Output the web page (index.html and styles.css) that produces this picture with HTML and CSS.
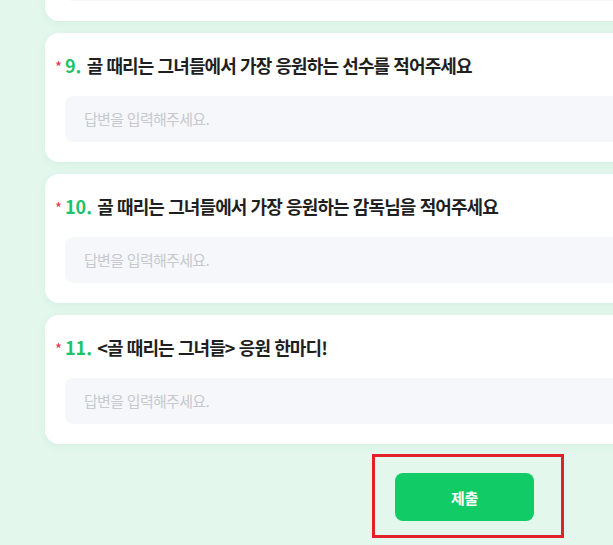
FILE: index.html
```html
<!DOCTYPE html>
<html lang="ko">
<head>
  <meta charset="UTF-8">
  <title>설문 - 골 때리는 그녀들</title>
  <link rel="stylesheet" href="styles.css">
</head>
<body>
  <div class="survey">
    <!-- 이전 질문 (스크롤되어 아래 끝만 보임) -->
    <div class="question">
      <div class="answer answer-filled"></div>
    </div>

    <div class="question">
      <h3 class="question-title"><span class="required">*</span><span class="num">9.</span> 골 때리는 그녀들에서 가장 응원하는 선수를 적어주세요</h3>
      <div class="answer">답변을 입력해주세요.</div>
    </div>

    <div class="question">
      <h3 class="question-title"><span class="required">*</span><span class="num">10.</span> 골 때리는 그녀들에서 가장 응원하는 감독님을 적어주세요</h3>
      <div class="answer">답변을 입력해주세요.</div>
    </div>

    <div class="question">
      <h3 class="question-title"><span class="required">*</span><span class="num">11.</span> &lt;골 때리는 그녀들&gt; 응원 한마디!</h3>
      <div class="answer">답변을 입력해주세요.</div>
    </div>

    <div class="submit-row">
      <div class="highlight">
        <button class="submit-btn" type="button">제출</button>
      </div>
    </div>
  </div>
</body>
</html>
```

FILE: styles.css
```css
html, body {
  margin: 0;
  height: 100%;
  overflow: hidden;
}

body {
  background: #e4f7ed;
  font-family: "Noto Sans CJK KR", "Noto Sans", sans-serif;
}

.survey {
  width: 760px;
  margin-top: -108px;
  padding-left: 45px;
  display: flex;
  flex-direction: column;
  gap: 12px;
}

.question {
  box-sizing: border-box;
  height: 129px;
  padding: 20px 0 20px 20px;
  background: #fff;
  border-radius: 14px;
  box-shadow: 0 2px 8px rgba(120, 200, 160, 0.15);
}

.question .answer-filled {
  margin-top: 43px;
}

.question-title {
  display: flex;
  align-items: center;
  margin: 0 0 19px;
  height: 24px;
  font-size: 18px;
  font-weight: 700;
  line-height: 24px;
  letter-spacing: -0.9px;
  color: #1f1f1f;
  white-space: pre;
}

.required {
  width: 10px;
  margin-left: -10px;
  margin-top: 4px;
  font-size: 15px;
  font-weight: 400;
  letter-spacing: 0;
  color: #f0304f;
}

.num {
  color: #1bc36a;
  letter-spacing: 0;
  margin-right: 1px;
}

.answer {
  box-sizing: border-box;
  height: 46px;
  padding-left: 19px;
  background: #f6f7fa;
  border-radius: 8px;
  font-size: 15px;
  line-height: 46px;
  letter-spacing: -0.7px;
  color: #c6c9ce;
}

.submit-row {
  display: flex;
  padding-left: 327px;
  margin-top: -2px;
}

.highlight {
  padding: 16px 27px 14px 20px;
  border: 3px solid #e2202a;
}

.submit-btn {
  width: 139px;
  height: 48px;
  border: none;
  border-radius: 8px;
  background: #10cb66;
  color: #fff;
  font-family: "Noto Sans CJK KR", sans-serif;
  font-size: 15px;
  font-weight: 700;
  letter-spacing: -0.3px;
}
```
